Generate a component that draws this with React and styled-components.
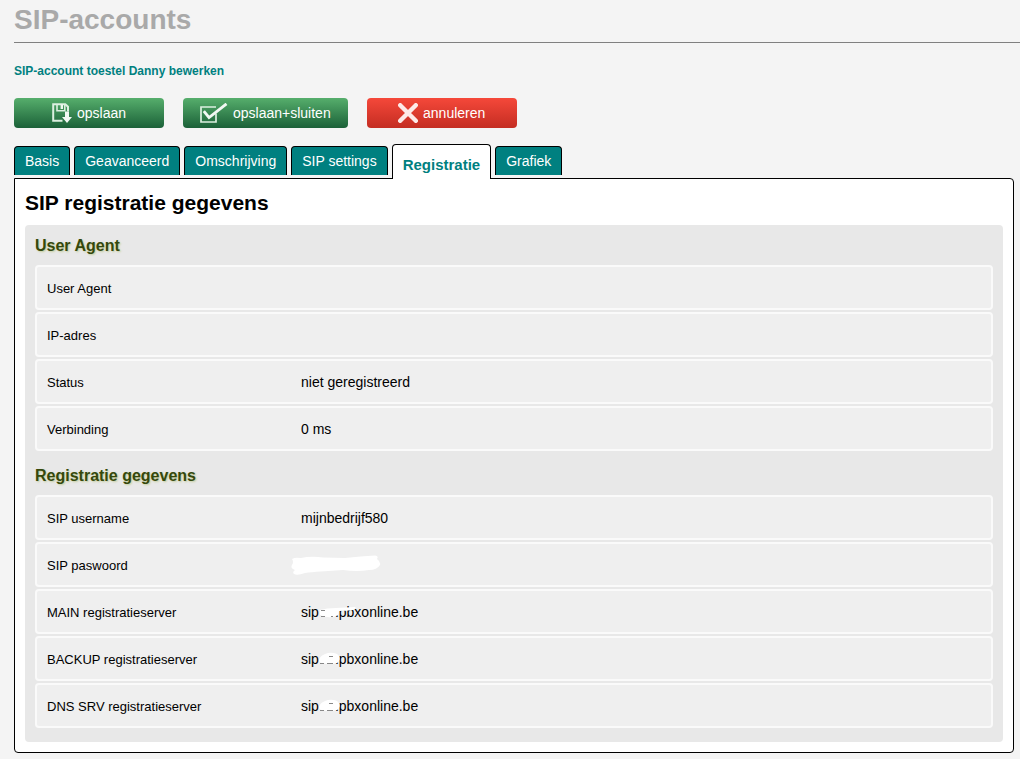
import React, { useState } from "react";

import styled, { createGlobalStyle, css } from "styled-components";

const tabs = [
  "Basis",
  "Geavanceerd",
  "Omschrijving",
  "SIP settings",
  "Registratie",
  "Grafiek",
];

const SaveIcon = () => (
  <svg width="20" height="20" viewBox="0 0 20 20" fill="none" aria-hidden="true">
    <path d="M10.5 17.8H1.2V1.2H13.3L16 3.8V8.5" stroke="#dcefe0" strokeWidth="2" />
    <path d="M5 1V7.8H12.8V1" stroke="#dcefe0" strokeWidth="1.6" />
    <path d="M9.8 1.5V6" stroke="#eef7f0" strokeWidth="2.4" />
    <path d="M13 8.5H17V14H20L15 20L10 14H13Z" fill="#f2f8f3" />
  </svg>
);

const CheckIcon = () => (
  <svg width="28" height="20" viewBox="0 0 28 20" fill="none" aria-hidden="true">
    <path d="M16 10.5V19H1V4H16" stroke="#dcefe0" strokeWidth="1.7" />
    <path d="M3.8 8.2L9 14.5L26.5 0.8" stroke="#f2f8f3" strokeWidth="2.8" />
  </svg>
);

const CrossIcon = () => (
  <svg width="20" height="20" viewBox="0 0 20 20" fill="none" aria-hidden="true">
    <path d="M2.2 2.2L17.8 17.8M17.8 2.2L2.2 17.8" stroke="#fdeae8" strokeWidth="4.4" strokeLinecap="round" />
  </svg>
);

const MaskedPassword = () => (
  <PasswordMask width="90" height="20" viewBox="0 0 90 20" role="img" aria-label="verborgen">
    <path
      d="M1 4Q4 2 10 3Q20 1 32 2.5L54 3Q70 1 84 0.5Q88 1 86 4Q90 7 89 10Q86 15 78 15Q66 17 52 15L30 16.5Q20 17 14 18Q6 21 3 19Q1 17 4 15Q-1 13 1 10Q3 7 1 4Z"
      fill="#fff"
    />
  </PasswordMask>
);

const Server = (props) => (
  <React.Fragment>
    sip
    <NumberMask>
      <svg width="40" height="16" viewBox="0 0 40 16" aria-hidden="true">
        {props.wide ? (
          <path d="M1 5Q8 3 17 3L36 2Q38 3 34 5Q28 6 20 6L19 10Q14 13 9 12Q4 12 1 10Z" fill="#fff" />
        ) : (
          <path d="M0 8Q1 3 9 1Q17 0 20 4Q22 8 18 11Q10 13 3 11Q0 11 0 8Z" fill="#fff" />
        )}
        <path d={props.wide ? "M2 5.5H6M2 11.5H6M12 11.5H14" : "M1 11.5H5M8 11.5H14M10 4.5H14"} stroke="#888" strokeWidth="1" />
      </svg>
    </NumberMask>
    .pbxonline.be
  </React.Fragment>
);

const sections = [
  {
    title: "User Agent",
    rows: [
      { label: "User Agent", value: "" },
      { label: "IP-adres", value: "" },
      { label: "Status", value: "niet geregistreerd" },
      { label: "Verbinding", value: "0 ms" },
    ],
  },
  {
    title: "Registratie gegevens",
    rows: [
      { label: "SIP username", value: "mijnbedrijf580" },
      { label: "SIP paswoord", value: <MaskedPassword /> },
      { label: "MAIN registratieserver", value: <Server wide /> },
      { label: "BACKUP registratieserver", value: <Server /> },
      { label: "DNS SRV registratieserver", value: <Server /> },
    ],
  },
];

const App = () => {
  const [active, setActive] = useState("Registratie");

  return (
    <React.Fragment>
      <GlobalStyle />
      <Page>
        <PageTitle>SIP-accounts</PageTitle>
        <SubTitle>SIP-account toestel Danny bewerken</SubTitle>
        <Toolbar>
          <ActionBtn type="button"><SaveIcon />opslaan</ActionBtn>
          <ActionBtn type="button"><CheckIcon />opslaan+sluiten</ActionBtn>
          <ActionBtn type="button" $danger><CrossIcon />annuleren</ActionBtn>
        </Toolbar>
        <TabBar role="tablist">
          {tabs.map((tab) => (
            <Tab
              key={tab}
              type="button"
              role="tab"
              aria-selected={tab === active}
              $active={tab === active}
              onClick={() => setActive(tab)}
            >
              {tab}
            </Tab>
          ))}
        </TabBar>
        <Panel>
          <PanelTitle>SIP registratie gegevens</PanelTitle>
          <Group>
            {sections.map((section) => (
              <section key={section.title}>
                <SectionTitle>{section.title}</SectionTitle>
                <RowList>
                  {section.rows.map((row) => (
                    <Row key={row.label}>
                      <RowLabel>{row.label}</RowLabel>
                      <RowValue>{row.value}</RowValue>
                    </Row>
                  ))}
                </RowList>
              </section>
            ))}
          </Group>
        </Panel>
      </Page>
    </React.Fragment>
  );
};

const GlobalStyle = createGlobalStyle`
  body {
    margin: 0;
    background-color: #f4f4f4;
    color: #000;
    font-family: "Liberation Sans", Arial, sans-serif;
  }
`
const Page = styled.main`
  padding: 4px 0 7px 14px;
`
const PageTitle = styled.h1`
  margin: 0;
  padding-bottom: 7px;
  border-bottom: 1px solid #808080;
  color: #a9a9a9;
  font-size: 28px;
  line-height: 31px;
`
const SubTitle = styled.h2`
  margin: 20px 0 19px;
  color: #008080;
  font-size: 12px;
  line-height: 16px;
`
const Toolbar = styled.div`
  display: flex;
  gap: 19px;
`
const ActionBtn = styled.button`
  display: flex;
  align-items: center;
  justify-content: center;
  gap: 5px;
  min-width: 150px;
  height: 30px;
  padding: 0 17px 1px;
  border: none;
  border-radius: 4px;
  background: linear-gradient(#56ae6c, #1b6138);
  color: white;
  font-family: inherit;
  font-size: 14px;
  cursor: pointer;

  ${(props) => props.$danger && css`
    background: linear-gradient(#f5483a, #c42d22);
  `}
`
const TabBar = styled.div`
  display: flex;
  align-items: flex-start;
  gap: 4px;
  height: 34px;
  margin-top: 16px;
`
const Tab = styled.button`
  height: 29px;
  margin-top: 2px;
  padding: 0 10px;
  border: 1px solid #000;
  border-bottom: none;
  border-radius: 4px 4px 0 0;
  background-color: #008080;
  color: white;
  font-family: inherit;
  font-size: 14px;
  cursor: pointer;

  ${(props) => props.$active && css`
    z-index: 1;
    height: 35px;
    margin-top: 0;
    padding-top: 5px;
    background-color: white;
    color: #008080;
    font-size: 15px;
    font-weight: bold;
  `}
`
const Panel = styled.section`
  margin-right: 6px;
  padding: 10px;
  border: 1px solid #000;
  border-radius: 0 4px 4px 4px;
  background-color: white;
`
const PanelTitle = styled.h2`
  margin: 0 0 8px;
  font-size: 21px;
  line-height: 28px;
`
const Group = styled.div`
  display: flex;
  flex-direction: column;
  gap: 14px;
  padding: 10px 10px 14px;
  border-radius: 4px;
  background-color: #e8e8e8;
`
const SectionTitle = styled.h3`
  margin: 0 0 8px;
  color: #35480c;
  font-size: 16px;
  line-height: 22px;
  text-shadow: 1px 1px 2px #c3cd9a;
`
const RowList = styled.dl`
  display: flex;
  flex-direction: column;
  gap: 2px;
  margin: 0;
`
const Row = styled.div`
  display: flex;
  align-items: center;
  box-sizing: border-box;
  height: 45px;
  padding: 1px 10px 0;
  border: 2px solid #fafafa;
  border-radius: 4px;
  background-color: #efefef;
`
const RowLabel = styled.dt`
  width: 254px;
  font-size: 13px;
`
const RowValue = styled.dd`
  flex: 1;
  margin: 0;
  font-size: 14px;
`
const PasswordMask = styled.svg`
  display: block;
  margin-left: -10px;
`
const NumberMask = styled.span`
  position: relative;
  display: inline-block;
  width: 16px;

  svg {
    position: absolute;
    left: 0;
    bottom: -4px;
  }
`

export default App
